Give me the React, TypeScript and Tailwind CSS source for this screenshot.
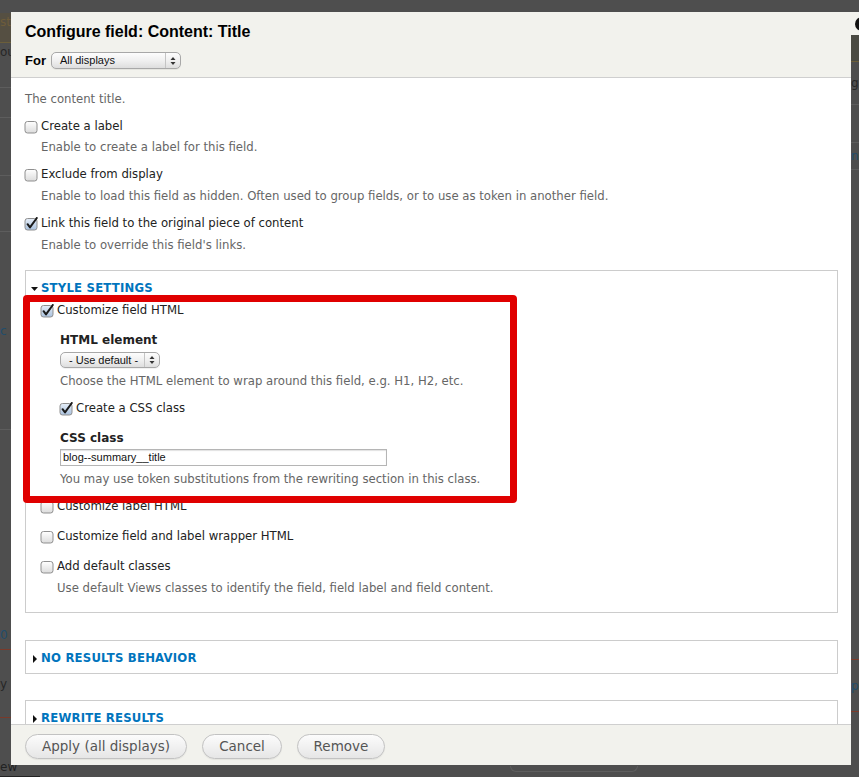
import React from "react";

const body = "font-['DejaVu_Sans',sans-serif]";
const helv = "font-['Liberation_Sans',Arial,sans-serif]";

function Checkbox({ checked = false }: { checked?: boolean }) {
  return (
    <svg width="14" height="14" viewBox="0 0 14 14" className="shrink-0">
      <defs>
        <linearGradient id={checked ? "cbOn" : "cbOff"} x1="0" y1="0" x2="0" y2="1">
          <stop offset="0" stopColor={checked ? "#e6eef8" : "#ffffff"} />
          <stop offset="1" stopColor={checked ? "#a9c1de" : "#dcdcdc"} />
        </linearGradient>
      </defs>
      <rect x="1" y="1.5" width="12" height="11.5" rx="2.5" fill={`url(#${checked ? "cbOn" : "cbOff"})`} stroke="#8f8f8f" />
      {checked && (
        <path d="M3.6 7.2 L6 10.4 L12.8 1" fill="none" stroke="#1a1a1a" strokeWidth="2" strokeLinecap="round" strokeLinejoin="round" />
      )}
    </svg>
  );
}

function SelectArrows() {
  return (
    <svg width="6" height="10" viewBox="0 0 6 10">
      <path d="M3 1 L5.5 4 L0.5 4 Z" fill="#333" />
      <path d="M3 9 L5.5 6 L0.5 6 Z" fill="#333" />
    </svg>
  );
}

function Select({ label, width, height }: { label: string; width: string; height: string }) {
  return (
    <div
      className={`${width} ${height} ${helv} flex items-center rounded-[5px] border border-[#a8a8a8] bg-gradient-to-b from-[#fdfdfd] via-[#f0f0f0] to-[#dedede] text-[11px] text-[#111] shadow-[0_1px_0_rgba(0,0,0,0.05)]`}
    >
      <span className="flex-1 truncate pl-[8px] leading-none">{label}</span>
      <span className="flex h-full w-[15px] items-center justify-center border-l border-[#c4c4c4]">
        <SelectArrows />
      </span>
    </div>
  );
}

function Row({ checked, label, className = "" }: { checked?: boolean; label: string; className?: string }) {
  return (
    <div className={`flex h-[18px] items-center gap-[3px] pt-[4px] text-[11.7px] text-[#222] ${className}`}>
      <Checkbox checked={checked} />
      <span>{label}</span>
    </div>
  );
}

function Desc({ children, className = "" }: { children: React.ReactNode; className?: string }) {
  return <div className={`h-[18px] text-[11.7px] leading-[20px] text-[#666] ${className}`}>{children}</div>;
}

function Heading({ children, className = "" }: { children: React.ReactNode; className?: string }) {
  return <div className={`h-[18px] text-[12px] leading-[20px] font-bold text-[#222] ${className}`}>{children}</div>;
}

function Legend({ open, children }: { open?: boolean; children: React.ReactNode }) {
  return (
    <div className="flex h-[18px] items-center pt-[3px] pl-[5px]">
      <span className="flex w-[10px] items-center">
        {open ? (
          <svg width="7" height="4" viewBox="0 0 7 4">
            <path d="M0 0 H7 L3.5 4 Z" fill="#111" />
          </svg>
        ) : (
          <svg width="7" height="8" viewBox="0 0 7 8" className="ml-[2px]">
            <path d="M0 0 L4 4 L0 8 Z" fill="#111" />
          </svg>
        )}
      </span>
      <span className="text-[11.7px] font-bold tracking-[0.2px] text-[#0074bd] uppercase">{children}</span>
    </div>
  );
}

function Button({ children, width }: { children: React.ReactNode; width: string }) {
  return (
    <button
      className={`${width} h-[25px] rounded-full border border-[#c2c2c2] bg-gradient-to-b from-[#fcfcfc] to-[#e6e6e6] text-[13.5px] text-[#555] shadow-[0_1px_1px_rgba(0,0,0,0.06)]`}
    >
      {children}
    </button>
  );
}

// rows of the dimmed page that peek out at the left and right of the dialog
const leftRows = [
  { h: "h-[13px]", text: "", tone: "" },
  { h: "h-[30px]", text: "ste", tone: "bg-[#554f42] border-[#6b5e3a] text-[#6e5c3a]" },
  { h: "h-[45px]", text: "ou", tone: "border-[#5d5d5d] text-[#262626]" },
  { h: "h-[30px]", text: "", tone: "border-[#5d5d5d]" },
  { h: "h-[58px]", text: "", tone: "border-[#5d5d5d]" },
  { h: "h-[56px]", text: "", tone: "border-[#5d5d5d]" },
  { h: "h-[198px]", text: "c", tone: "border-[#5d5d5d] text-[#214d6c] items-center" },
  { h: "h-[220px]", text: "0", tone: "border-[#7a3a2a] text-[#214d6c] items-end pb-[5px]" },
  { h: "h-[68px]", text: "y o", tone: "border-[#7a3a2a] text-[#262626] items-center" },
  { h: "h-[59px]", text: "ew", tone: "text-[#222] items-end" },
];

const rightRows = [
  { h: "h-[35px]", text: "", tone: "" },
  { h: "h-[27px]", text: "", tone: "bg-[#4a4a42] border-[#6b5e3a]" },
  { h: "h-[43px]", text: "g", tone: "border-[#5d5d5d] text-[#262626] items-center" },
  { h: "h-[38px]", text: "", tone: "border-[#5d5d5d]" },
  { h: "h-[27px]", text: "n", tone: "border-[#5d5d5d] text-[#214d6c] items-center" },
  { h: "h-[490px]", text: "", tone: "border-[#7a3a2a]" },
  { h: "h-[52px]", text: "p", tone: "border-[#7a3a2a] text-[#214d6c] items-center" },
];

function Strip({ rows, className }: { rows: typeof leftRows; className: string }) {
  return (
    <div className={`flex flex-col overflow-hidden text-[12px] ${className}`}>
      {rows.map((r, i) => (
        <div key={i} className={`${r.h} flex shrink-0 border-b ${r.tone || "border-transparent"}`}>
          {r.text && <span className="whitespace-nowrap">{r.text}</span>}
        </div>
      ))}
    </div>
  );
}

export default function App() {
  return (
    <div className={`relative flex h-[777px] w-[859px] justify-between overflow-hidden bg-[#4e4e4e] ${body}`}>
      <Strip rows={leftRows} className="w-[40px]" />
      <Strip rows={rightRows} className="w-[8px]" />

      {/* close button peeking at the top right */}
      <div className="absolute left-[851px] top-[12px] h-[23px] w-[8px] bg-[#f2f2ed]" />
      <div className="absolute left-[855px] top-[17px] h-[14px] w-[14px] rounded-full bg-[#111]" />

      <div className="absolute left-[11px] top-[12px] flex h-[753px] w-[840px] flex-col bg-white">
        <div className="h-[66px] shrink-0 border-b border-[#cfcfcf] bg-[#f2f2ed] px-[14px] pt-[10px]">
          <h1 className={`${helv} h-[20px] text-[16px] leading-[20px] font-bold text-black`}>
            Configure field: Content: Title
          </h1>
          <div className="mt-[10px] flex h-[17px] items-center gap-[5px]">
            <span className={`${helv} text-[13px] font-bold text-black`}>For</span>
            <Select label="All displays" width="w-[130px]" height="h-[17px]" />
          </div>
        </div>

        <div className="flex-1 overflow-hidden px-[14px]">
          <Desc className="mt-[11px]">The content title.</Desc>

          <Row label="Create a label" className="mt-[9px] -ml-px" />
          <Desc className="mt-[3px] pl-[16px]">Enable to create a label for this field.</Desc>

          <Row label="Exclude from display" className="mt-[9px] -ml-px" />
          <Desc className="mt-[4px] pl-[16px]">
            Enable to load this field as hidden. Often used to group fields, or to use as token in another field.
          </Desc>

          <Row checked label="Link this field to the original piece of content" className="mt-[9px] -ml-px" />
          <Desc className="mt-[4px] pl-[16px]">Enable to override this field's links.</Desc>

          <div className="mt-[17px] mr-[-1px] border border-[#cccccc] pt-[7px] pb-[16px]">
            <Legend open>Style settings</Legend>
            <div className="pl-[14px]">
              <Row checked label="Customize field HTML" className="mt-[4px]" />
              <div className="pl-[20px]">
                <Heading className="mt-[12px]">HTML element</Heading>
                <div className="mt-[4px]">
                  <Select label="- Use default -" width="w-[100px]" height="h-[16px]" />
                </div>
                <Desc className="mt-[3px]">Choose the HTML element to wrap around this field, e.g. H1, H2, etc.</Desc>
                <Row checked label="Create a CSS class" className="mt-[9px] -ml-px" />
                <Heading className="mt-[12px]">CSS class</Heading>
                <div
                  className={`${helv} mt-[3px] flex h-[17px] w-[327px] items-center border border-[#b5b5b5] bg-white pl-[2px] text-[11px] text-[#111] shadow-[inset_0_1px_1px_rgba(0,0,0,0.12)]`}
                >
                  blog--summary__title
                </div>
                <Desc className="mt-[3px]">You may use token substitutions from the rewriting section in this class.</Desc>
              </div>
              <Row label="Customize label HTML" className="mt-[9px]" />
              <Row label="Customize field and label wrapper HTML" className="mt-[12px]" />
              <Row label="Add default classes" className="mt-[12px]" />
              <Desc className="mt-[4px] pl-[17px]">Use default Views classes to identify the field, field label and field content.</Desc>
            </div>
          </div>

          <div className="mt-[27px] mr-[-1px] border border-[#cccccc] py-[7px]">
            <Legend>No results behavior</Legend>
          </div>

          <div className="mt-[26px] mr-[-1px] h-[60px] border border-[#cccccc] pt-[7px]">
            <Legend>Rewrite results</Legend>
          </div>
        </div>

        <div className="flex h-[41px] shrink-0 gap-[15px] border-t border-[#cfcfcf] bg-[#f2f2ed] pt-[9px] pl-[14px]">
          <Button width="w-[162px]">Apply (all displays)</Button>
          <Button width="w-[80px]">Cancel</Button>
          <Button width="w-[88px]">Remove</Button>
        </div>
      </div>

      {/* shadow of a button on the page below the dialog */}
      <div className="absolute left-[510px] top-[766px] h-[6px] w-[128px] rounded-b-[8px] border border-t-0 border-[#5e5e5e]" />

      {/* red annotation frame */}
      <div className="absolute left-[23px] top-[295px] h-[208px] w-[494px] rounded-[4px] border-[7px] border-[#e00000]" />
    </div>
  );
}
